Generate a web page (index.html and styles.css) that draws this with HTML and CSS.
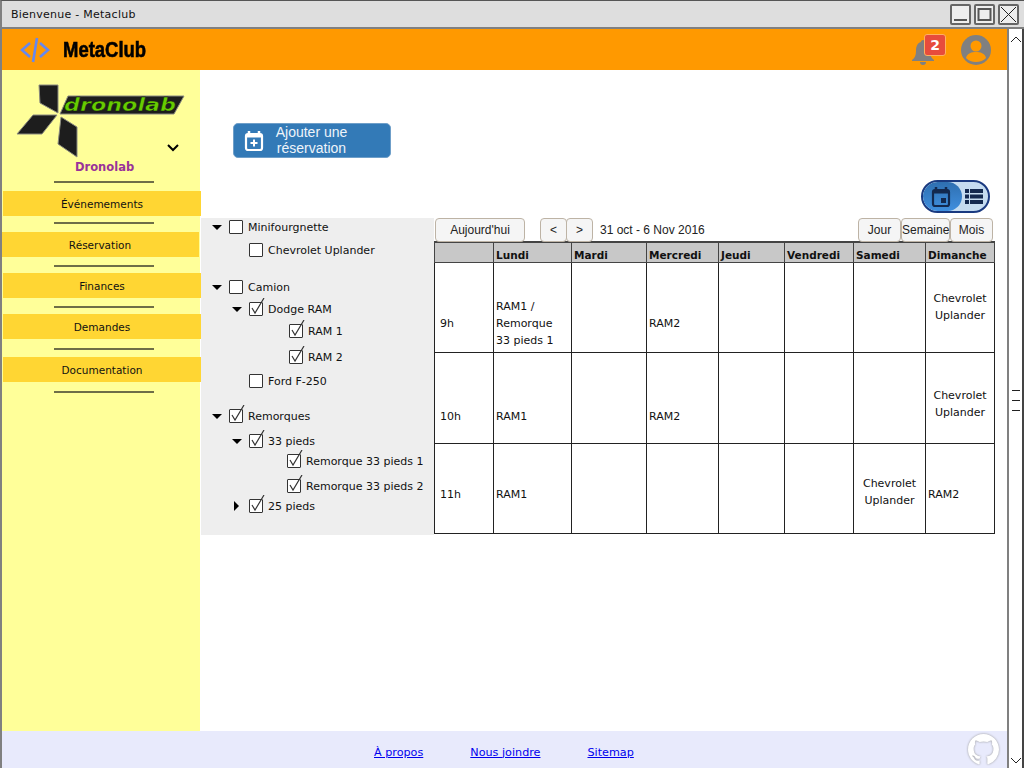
FILE: index.html
```html
<!DOCTYPE html>
<html lang="fr">
<head>
    <meta charset="UTF-8">
    <title>Bienvenue - Metaclub</title>
    <link rel="stylesheet" href="styles.css">
</head>
<body>
<div class="window">
    <div class="titlebar">
        <span class="title">Bienvenue - Metaclub</span>
        <div class="win-buttons">
            <button class="win-btn"><svg width="17" height="17" viewBox="0 0 17 17"><path d="M2 14h13" stroke="#555" stroke-width="2"/></svg></button>
            <button class="win-btn"><svg width="17" height="17" viewBox="0 0 17 17"><rect x="2.5" y="3" width="12" height="11" fill="none" stroke="#555" stroke-width="2"/></svg></button>
            <button class="win-btn"><svg width="17" height="17" viewBox="0 0 17 17"><path d="M1 1l15 15M16 1L1 16" stroke="#222" stroke-width="1"/></svg></button>
        </div>
    </div>

    <div class="frame">
        <div class="app">
            <header class="topbar">
                <svg class="code-icon" width="30" height="30" viewBox="0 0 30 30"><path d="M10 8L2 15l8 7M20 8l8 7-8 7M17 3l-4 24" fill="none" stroke="#6688ee" stroke-width="2.6"/></svg>
                <span class="brand">MetaClub</span>
                <div class="notif">
                    <svg width="24" height="30" viewBox="0 0 24 30"><path d="M12 3c-1.400 0-2 1-2 2-4 1-5 5-5 9 0 4-1 7-4 9v1h22v-1c-3-2-4-5-4-9 0-4-1-8-5-9 0-1-.6-2-2-2zM9 25a3 3 0 0 0 6 0z" fill="#808080"/></svg>
                    <span class="badge">2</span>
                </div>
                <svg class="avatar" width="30" height="30" viewBox="0 0 30 30"><circle cx="15" cy="15" r="15" fill="#808080"/><circle cx="15" cy="11" r="5.500" fill="#ff9900"/><path d="M5 23c1-5 6-6 10-6s9 1 10 6c-2.500 2.500-6 4-10 4s-7.500-1.500-10-4z" fill="#ff9900"/></svg>
            </header>

            <div class="middle">
                <aside class="sidebar">
                    <svg class="logo" width="198" height="82" viewBox="0 0 198 82">
                        <g fill="#1d1d1d" stroke="#8a8a80" stroke-width="1">
                            <path d="M37 5h19v28l-18-10z"/>
                            <path d="M31 35h24L40 54H15z"/>
                            <path d="M59 37l16 10v30l-19-13z"/>
                            <path d="M66 16h116l-10 18H58z"/>
                        </g>
                        <text class="logo-word" x="62" y="31" textLength="112" lengthAdjust="spacingAndGlyphs">dronolab</text>
                        <path d="M166 65l5 5 5-5" fill="none" stroke="#000" stroke-width="2"/>
                    </svg>
                    <div class="club-name">Dronolab</div>
                    <div class="sep"></div>
                    <nav class="menu">
                        <a class="menu-item">Événemements</a>
                        <div class="sep"></div>
                        <a class="menu-item shifted">Réservation</a>
                        <div class="sep low"></div>
                        <a class="menu-item">Finances</a>
                        <div class="sep low"></div>
                        <a class="menu-item">Demandes</a>
                        <div class="sep lower"></div>
                        <a class="menu-item">Documentation</a>
                        <div class="sep lower"></div>
                    </nav>
                </aside>

                <main class="content">
                    <button class="add-btn">
                        <svg width="20" height="22" viewBox="0 0 20 22"><path d="M5 1v3M15 1v3" stroke="#fff" stroke-width="2.500"/><rect x="2" y="4" width="16" height="16" rx="2" fill="none" stroke="#fff" stroke-width="2.200"/><path d="M2 6h16" stroke="#fff" stroke-width="3"/><path d="M10 9.500v7M6.500 13h7" stroke="#fff" stroke-width="2"/></svg>
                        <span class="add-label">Ajouter une<br>réservation</span>
                    </button>

                    <div class="view-row">
                        <div class="view-toggle">
                            <span class="view-on">
                                <svg width="20" height="22" viewBox="0 0 20 22"><path d="M5 1v3M15 1v3" stroke="#13294f" stroke-width="2.500"/><rect x="2" y="4" width="16" height="16" rx="2" fill="none" stroke="#13294f" stroke-width="2.200"/><path d="M2 6h16" stroke="#13294f" stroke-width="3"/><rect x="10" y="12" width="5" height="5" fill="#13294f"/></svg>
                            </span>
                            <svg class="view-off" width="18" height="15" viewBox="0 0 18 15" fill="#13294f"><path d="M0 0h4v4H0zM5 0h13v4H5zM0 5.500h4v4H0zM5 5.500h13v4H5zM0 11h4v4H0zM5 11h13v4H5z"/></svg>
                        </div>
                    </div>

                    <div class="planner">
                        <div class="tree">
                            <div class="row lvl0 first"><span class="arrow down"></span><span class="box"></span>Minifourgnette</div>
                            <div class="row lvl1 sp3"><span class="arrow"></span><span class="box"></span>Chevrolet Uplander</div>
                            <div class="row lvl0 sp17"><span class="arrow down"></span><span class="box"></span>Camion</div>
                            <div class="row lvl1 sp2"><span class="arrow down"></span><span class="box on"><svg width="18" height="20" viewBox="0 0 18 20"><path d="M3 10l3 5 9-15" fill="none" stroke="#333" stroke-width="1.200"/></svg></span>Dodge RAM</div>
                            <div class="row lvl2 sp2"><span class="arrow"></span><span class="box on"><svg width="18" height="20" viewBox="0 0 18 20"><path d="M3 10l3 5 9-15" fill="none" stroke="#333" stroke-width="1.200"/></svg></span>RAM 1</div>
                            <div class="row lvl2 sp6"><span class="arrow"></span><span class="box on"><svg width="18" height="20" viewBox="0 0 18 20"><path d="M3 10l3 5 9-15" fill="none" stroke="#333" stroke-width="1.200"/></svg></span>RAM 2</div>
                            <div class="row lvl1 sp4"><span class="arrow"></span><span class="box"></span>Ford F-250</div>
                            <div class="row lvl0 sp15"><span class="arrow down"></span><span class="box on"><svg width="18" height="20" viewBox="0 0 18 20"><path d="M3 10l3 5 9-15" fill="none" stroke="#333" stroke-width="1.200"/></svg></span>Remorques</div>
                            <div class="row lvl1 sp5"><span class="arrow down"></span><span class="box on"><svg width="18" height="20" viewBox="0 0 18 20"><path d="M3 10l3 5 9-15" fill="none" stroke="#333" stroke-width="1.200"/></svg></span>33 pieds</div>
                            <div class="row lvl3"><span class="arrow"></span><span class="box on"><svg width="18" height="20" viewBox="0 0 18 20"><path d="M3 10l3 5 9-15" fill="none" stroke="#333" stroke-width="1.200"/></svg></span>Remorque 33 pieds 1</div>
                            <div class="row lvl3 sp5"><span class="arrow"></span><span class="box on"><svg width="18" height="20" viewBox="0 0 18 20"><path d="M3 10l3 5 9-15" fill="none" stroke="#333" stroke-width="1.200"/></svg></span>Remorque 33 pieds 2</div>
                            <div class="row lvl1"><span class="arrow right"></span><span class="box on"><svg width="18" height="20" viewBox="0 0 18 20"><path d="M3 10l3 5 9-15" fill="none" stroke="#333" stroke-width="1.200"/></svg></span>25 pieds</div>
                        </div>

                        <div class="calendar">
                            <div class="cal-toolbar">
                                <button class="cal-btn today">Aujourd'hui</button>
                                <div class="cal-group">
                                    <button class="cal-btn nav">&lt;</button>
                                    <button class="cal-btn nav">&gt;</button>
                                </div>
                                <span class="cal-range">31 oct - 6 Nov 2016</span>
                                <div class="cal-group views">
                                    <button class="cal-btn jour">Jour</button>
                                    <button class="cal-btn semaine">Semaine</button>
                                    <button class="cal-btn mois">Mois</button>
                                </div>
                            </div>
                            <table class="cal-table">
                                <colgroup>
                                    <col class="c-hour"><col class="c-lun"><col class="c-mar"><col class="c-mer"><col class="c-jeu"><col class="c-ven"><col class="c-sam"><col class="c-dim">
                                </colgroup>
                                <thead>
                                    <tr><th></th><th>Lundi</th><th>Mardi</th><th>Mercredi</th><th>Jeudi</th><th>Vendredi</th><th>Samedi</th><th>Dimanche</th></tr>
                                </thead>
                                <tbody>
                                    <tr>
                                        <td class="hour drop32">9h</td><td class="drop32">RAM1 /<br>Remorque<br>33 pieds 1</td><td></td><td class="drop32">RAM2</td><td></td><td></td><td></td><td class="mid">Chevrolet<br>Uplander</td>
                                    </tr>
                                    <tr class="tall">
                                        <td class="hour drop38">10h</td><td class="drop38">RAM1</td><td></td><td class="drop38">RAM2</td><td></td><td></td><td></td><td class="mid drop12">Chevrolet<br>Uplander</td>
                                    </tr>
                                    <tr>
                                        <td class="hour drop12">11h</td><td class="drop12">RAM1</td><td></td><td></td><td></td><td></td><td class="mid drop7">Chevrolet<br>Uplander</td><td class="drop12">RAM2</td>
                                    </tr>
                                </tbody>
                            </table>
                        </div>
                    </div>
                </main>
            </div>

            <footer class="footer">
                <div class="foot-links">
                    <a href="#">À propos</a>
                    <a href="#">Nous joindre</a>
                    <a href="#">Sitemap</a>
                </div>
                <svg class="github" width="31" height="31" viewBox="0 0 16 16"><path fill="#fff" d="M8 0C3.580 0 0 3.580 0 8c0 3.540 2.290 6.530 5.470 7.590.4.070.55-.17.55-.38 0-.19-.01-.82-.01-1.490-2.010.37-2.530-.49-2.690-.94-.09-.23-.48-.94-.82-1.130-.28-.15-.68-.52-.01-.53.630-.01 1.080.580 1.230.820.720 1.210 1.870.870 2.330.660.070-.520.280-.870.510-1.070-1.780-.2-3.640-.890-3.640-3.950 0-.870.310-1.590.820-2.150-.08-.2-.36-1.020.08-2.120 0 0 .670-.21 2.200.820.640-.18 1.320-.27 2-.27s1.360.09 2 .27c1.530-1.040 2.200-.82 2.200-.82.440 1.100.160 1.920.080 2.120.510.560.820 1.270.820 2.150 0 3.070-1.870 3.750-3.650 3.950.290.250.540.730.540 1.480 0 1.070-.01 1.930-.01 2.200 0 .210.150.460.550.380A8.010 8.010 0 0 0 16 8c0-4.420-3.580-8-8-8z"/></svg>
            </footer>
        </div>

        <div class="scrollbar">
            <svg width="12" height="8" viewBox="0 0 12 8"><path d="M1 7l5-5 5 5" fill="none" stroke="#222"/></svg>
            <div class="thumb-lines"><i></i><i></i><i></i></div>
            <svg width="12" height="8" viewBox="0 0 12 8"><path d="M1 1l5 5 5-5" fill="none" stroke="#222"/></svg>
        </div>
    </div>
</div>
</body>
</html>
```

FILE: styles.css
```css
* {
    box-sizing: border-box;
}

body {
    margin: 0;
    background: #fff;
    font-family: "DejaVu Sans", sans-serif;
    font-size: 11px;
    color: #111;
}

button {
    font-family: "Liberation Sans", sans-serif;
}

.window {
    width: 1024px;
    height: 768px;
    display: flex;
    flex-direction: column;
    overflow: hidden;
    border-top: 1px solid #555;
    border-left: 2px solid #808080;
}

.titlebar {
    height: 28px;
    flex: none;
    display: flex;
    align-items: center;
    justify-content: space-between;
    padding: 0 5px 0 9px;
    background: #dedede;
    border-bottom: 2px solid #808080;
}

.title {
    font-size: 11px;
    letter-spacing: 0.25px;
}

.win-buttons {
    display: flex;
    gap: 3px;
}

.win-btn {
    width: 21px;
    height: 21px;
    padding: 0;
    display: flex;
    align-items: center;
    justify-content: center;
    background: #eee;
    border: 2px solid #666;
    border-radius: 2px;
}

.frame {
    flex: 1;
    display: flex;
    min-height: 0;
}

.app {
    width: 1005px;
    display: flex;
    flex-direction: column;
}

.topbar {
    height: 41px;
    flex: none;
    display: flex;
    align-items: center;
    padding: 0 16px 0 18px;
    background: #ff9900;
}

.brand {
    margin-left: 13px;
    font-family: "Liberation Sans", sans-serif;
    font-weight: bold;
    font-size: 22px;
    color: #000;
    -webkit-text-stroke: 0.6px #000;
    transform: scaleX(0.84);
    transform-origin: left center;
}

.notif {
    position: relative;
    margin-left: auto;
    margin-top: 4px;
    height: 30px;
}

.badge {
    position: absolute;
    left: 13px;
    top: -3px;
    width: 22px;
    height: 22px;
    display: flex;
    align-items: center;
    justify-content: center;
    background: #e74c3c;
    border: 1px solid #ffb060;
    border-radius: 3px;
    color: #fff;
    font-weight: bold;
    font-size: 14px;
}

.avatar {
    margin-left: 26px;
}

.middle {
    flex: 1;
    display: flex;
    min-height: 0;
}

.sidebar {
    width: 198px;
    flex: none;
    background: #ffff99;
    padding-top: 10px;
}

.logo {
    display: block;
}

.logo-word {
    font-family: "DejaVu Sans", sans-serif;
    font-weight: bold;
    font-style: italic;
    font-size: 18px;
    fill: #66cc00;
    stroke: #111;
    stroke-width: 0.4px;
}

.club-name {
    margin-top: -2px;
    padding-left: 73px;
    font-weight: bold;
    font-size: 11.5px;
    color: #993399;
    line-height: 15px;
}

.sep {
    width: 100px;
    height: 2px;
    margin: 0 0 8px 52px;
    background: #6e6e48;
}

.sep.low {
    margin-top: 2px;
    margin-bottom: 6px;
}

.sep.lower {
    margin-top: 3px;
    margin-bottom: 7px;
}

.club-name + .sep {
    margin-top: 6px;
    margin-bottom: 0;
}

.menu {
    display: flex;
    flex-direction: column;
    margin-top: 8px;
}

.menu-item {
    width: 198px;
    height: 25px;
    margin: 0 0 6px 1px;
    display: flex;
    align-items: center;
    justify-content: center;
    background: #ffd633;
    font-size: 10.5px;
    position: relative;
}

.menu-item.shifted {
    margin-left: -1px;
}

.content {
    flex: 1;
    padding-top: 53px;
    background: #fff;
}

.add-btn {
    width: 158px;
    height: 35px;
    margin-left: 33px;
    padding: 0 0 0 10px;
    display: flex;
    align-items: center;
    gap: 5px;
    background: #337ab7;
    border: 1px solid #6f9fc9;
    border-radius: 5px;
    color: #eef4fa;
}

.add-label {
    flex: 1;
    padding: 0 36px 2px 0;
    font-size: 14px;
    line-height: 16px;
    text-align: center;
}

.view-row {
    display: flex;
    justify-content: flex-end;
    padding-right: 17px;
    margin-top: 22px;
}

.view-toggle {
    width: 69px;
    height: 33px;
    display: flex;
    align-items: center;
    background: #c5dcf0;
    border: 2px solid #1a3a80;
    border-radius: 17px;
    overflow: hidden;
}

.view-on {
    width: 39px;
    height: 29px;
    display: flex;
    align-items: center;
    justify-content: center;
    padding-right: 4px;
    background: linear-gradient(#2f6fb0, #3f8fdf);
    border-radius: 15px;
}

.view-off {
    margin-left: 3px;
}

.planner {
    display: flex;
    margin-top: 5px;
}

.tree {
    width: 233px;
    height: 317px;
    margin-left: 1px;
    background: #eeeeee;
    flex: none;
}

.row {
    height: 20px;
    display: flex;
    align-items: center;
}

.row.first { margin-top: -1px; }

.lvl0 { padding-left: 11px; }
.lvl1 { padding-left: 31px; }
.lvl2 { padding-left: 71px; }
.lvl3 { padding-left: 69px; }

.sp2 { margin-top: 2px; }
.sp3 { margin-top: 3px; }
.sp4 { margin-top: 4px; }
.sp5 { margin-top: 5px; }
.sp6 { margin-top: 6px; }
.sp15 { margin-top: 15px; }
.sp17 { margin-top: 17px; }

.arrow {
    width: 17px;
    flex: none;
}

.arrow.down::before {
    content: "";
    display: block;
    width: 0;
    height: 0;
    border-left: 5px solid transparent;
    border-right: 5px solid transparent;
    border-top: 5px solid #000;
}

.arrow.right::before {
    content: "";
    display: block;
    width: 0;
    height: 0;
    margin-left: 2px;
    border-top: 5px solid transparent;
    border-bottom: 5px solid transparent;
    border-left: 5px solid #000;
}

.box {
    position: relative;
    width: 14px;
    height: 14px;
    flex: none;
    margin-right: 5px;
    background: #fff;
    border: 1px solid #333;
    border-radius: 1px;
}

.box svg {
    position: absolute;
    left: -1px;
    top: -5px;
}

.calendar {
    width: 561px;
}

.cal-toolbar {
    height: 24px;
    display: flex;
    align-items: flex-start;
}

.cal-btn {
    height: 24px;
    padding: 0;
    background: #f5f5f5;
    border: 1px solid #bdb3a5;
    border-radius: 4px;
    font-size: 12px;
    color: #222;
}

.today {
    width: 90px;
    margin-left: 1px;
}

.cal-group {
    display: flex;
}

.nav {
    width: 27px;
}

.nav:first-child {
    margin-right: -1px;
}

.cal-group:not(.views) {
    margin-left: 15px;
}

.cal-range {
    margin-left: 7px;
    line-height: 24px;
    font-family: "Liberation Sans", sans-serif;
    font-size: 12px;
    color: #222;
}

.views {
    margin-left: auto;
    padding-right: 2px;
}

.jour { width: 43px; }
.semaine { width: 49px; }
.mois { width: 43px; }

.cal-table {
    width: 560px;
    margin-top: -1px;
    table-layout: fixed;
    border-collapse: collapse;
    border: 1px solid #222;
}

.c-hour { width: 59px; }
.c-lun { width: 78px; }
.c-mar { width: 75px; }
.c-mer { width: 72px; }
.c-jeu { width: 66px; }
.c-ven { width: 69px; }
.c-sam { width: 72px; }
.c-dim { width: 69px; }

.cal-table th {
    height: 20px;
    padding: 7px 0 0 2px;
    background: #c8c8c8;
    border: 1px solid #444;
    border-top-width: 2px;
    font-size: 10.5px;
    line-height: 11px;
    font-weight: bold;
    text-align: left;
}

.cal-table td {
    height: 90px;
    padding: 0 0 0 2px;
    border: 1px solid #222;
    line-height: 17px;
    vertical-align: middle;
    overflow: hidden;
}

.cal-table .tall td {
    height: 91px;
}

.cal-table td.hour {
    padding-left: 5px;
}

.cal-table td.drop32 { padding-top: 32px; }
.cal-table td.drop38 { padding-top: 38px; }
.cal-table td.drop12 { padding-top: 12px; }
.cal-table td.drop7 { padding-top: 7px; }

.cal-table td.mid {
    padding-left: 0;
    text-align: center;
}

.footer {
    height: 37px;
    flex: none;
    display: flex;
    align-items: center;
    justify-content: space-between;
    padding: 5px 8px 0 0;
    background: #e8eafc;
}

.foot-links {
    display: flex;
    gap: 47px;
    margin-left: 372px;
}

.foot-links a {
    color: #0000ee;
    font-size: 11.2px;
}

.github {
    margin-top: -5px;
    filter: drop-shadow(0 0 1px #999);
}

.scrollbar {
    width: 17px;
    display: flex;
    flex-direction: column;
    align-items: center;
    justify-content: space-between;
    padding: 6px 0 3px;
    background: #fff;
    border-left: 2px solid #808080;
    border-right: 2px solid #444;
}

.thumb-lines {
    display: flex;
    flex-direction: column;
    gap: 9px;
}

.thumb-lines i {
    display: block;
    width: 8px;
    height: 1px;
    background: #222;
}
```
